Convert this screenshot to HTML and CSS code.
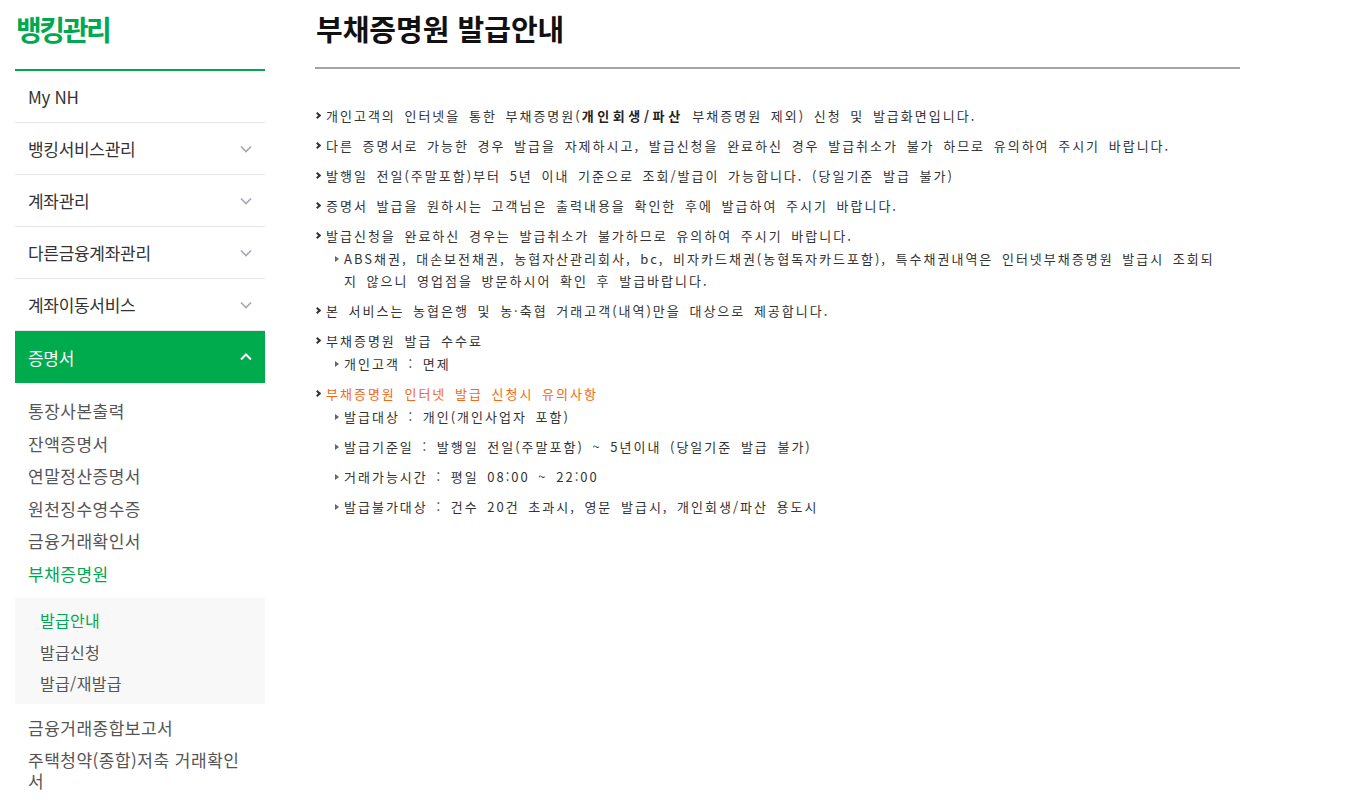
FILE: index.html
```html
<!DOCTYPE html>
<html lang="ko">
<head>
<meta charset="utf-8">
<title>부채증명원 발급안내</title>
<link rel="stylesheet" href="styles.css">
</head>
<body>
<div class="page">
  <aside class="lnb">
    <h2 class="lnb-title">뱅킹관리</h2>
    <ul class="menu">
      <li class="menu-item"><a class="menu-link" href="#">My NH</a></li>
      <li class="menu-item"><a class="menu-link" href="#">뱅킹서비스관리<svg class="arrow" width="12" height="8" viewBox="0 0 12 8"><polyline points="1,1.5 6,6.5 11,1.5"/></svg></a></li>
      <li class="menu-item"><a class="menu-link" href="#">계좌관리<svg class="arrow" width="12" height="8" viewBox="0 0 12 8"><polyline points="1,1.5 6,6.5 11,1.5"/></svg></a></li>
      <li class="menu-item"><a class="menu-link" href="#">다른금융계좌관리<svg class="arrow" width="12" height="8" viewBox="0 0 12 8"><polyline points="1,1.5 6,6.5 11,1.5"/></svg></a></li>
      <li class="menu-item"><a class="menu-link" href="#">계좌이동서비스<svg class="arrow" width="12" height="8" viewBox="0 0 12 8"><polyline points="1,1.5 6,6.5 11,1.5"/></svg></a></li>
      <li class="menu-item open"><a class="menu-link" href="#">증명서<svg class="arrow" width="12" height="8" viewBox="0 0 12 8"><polyline points="1,6.5 6,1.5 11,6.5"/></svg></a>
        <ul class="sub-menu">
          <li><a class="sub-link" href="#">통장사본출력</a></li>
          <li><a class="sub-link" href="#">잔액증명서</a></li>
          <li><a class="sub-link" href="#">연말정산증명서</a></li>
          <li><a class="sub-link" href="#">원천징수영수증</a></li>
          <li><a class="sub-link" href="#">금융거래확인서</a></li>
          <li class="on"><a class="sub-link" href="#">부채증명원</a>
            <ul class="sub-menu2">
              <li class="on"><a href="#">발급안내</a></li>
              <li><a href="#">발급신청</a></li>
              <li><a href="#">발급/재발급</a></li>
            </ul>
          </li>
          <li><a class="sub-link" href="#">금융거래종합보고서</a></li>
          <li><a class="sub-link" href="#">주택청약(종합)저축 거래확인서</a></li>
        </ul>
      </li>
    </ul>
  </aside>

  <main class="content">
    <h1 class="page-title">부채증명원 발급안내</h1>
    <ul class="info">
      <li>개인고객의 인터넷을 통한 부채증명원(<strong>개인회생/파산</strong> 부채증명원 제외) 신청 및 발급화면입니다.</li>
      <li>다른 증명서로 가능한 경우 발급을 자제하시고, 발급신청을 완료하신 경우 발급취소가 불가 하므로 유의하여 주시기 바랍니다.</li>
      <li>발행일 전일(주말포함)부터 5년 이내 기준으로 조회/발급이 가능합니다. (당일기준 발급 불가)</li>
      <li>증명서 발급을 원하시는 고객님은 출력내용을 확인한 후에 발급하여 주시기 바랍니다.</li>
      <li>발급신청을 완료하신 경우는 발급취소가 불가하므로 유의하여 주시기 바랍니다.
        <ul class="sub">
          <li>ABS채권, 대손보전채권, 농협자산관리회사, bc, 비자카드채권(농협독자카드포함), 특수채권내역은 인터넷부채증명원 발급시 조회되지 않으니 영업점을 방문하시어 확인 후 발급바랍니다.</li>
        </ul>
      </li>
      <li>본 서비스는 농협은행 및 농·축협 거래고객(내역)만을 대상으로 제공합니다.</li>
      <li>부채증명원 발급 수수료
        <ul class="sub">
          <li>개인고객 : 면제</li>
        </ul>
      </li>
      <li><span class="notice">부채증명원 인터넷 발급 신청시 유의사항</span>
        <ul class="sub">
          <li>발급대상 : 개인(개인사업자 포함)</li>
          <li>발급기준일 : 발행일 전일(주말포함) ~ 5년이내 (당일기준 발급 불가)</li>
          <li>거래가능시간 : 평일 08:00 ~ 22:00</li>
          <li>발급불가대상 : 건수 20건 초과시, 영문 발급시, 개인회생/파산 용도시</li>
        </ul>
      </li>
    </ul>
  </main>
</div>
</body>
</html>
```

FILE: styles.css
```css
body {
  margin: 0;
  background: #fff;
  color: #333;
  font-family: "Noto Sans CJK KR", "Noto Sans", sans-serif;
}

a {
  text-decoration: none;
  color: inherit;
}

.page {
  display: flex;
  align-items: flex-start;
  padding-left: 15px;
}

/* ---------- sidebar ---------- */
.lnb {
  width: 250px;
  flex: none;
}

.lnb-title {
  margin: 0;
  padding: 9px 0 20px 1px;
  font-size: 28px;
  line-height: 40px;
  font-weight: 700;
  letter-spacing: -2.4px;
  color: #00a84f;
  border-bottom: 2px solid #00a84f;
}

.menu {
  list-style: none;
  margin: 0;
  padding: 0;
}

.menu-link {
  display: flex;
  align-items: center;
  justify-content: space-between;
  height: 51px;
  padding: 0 13px;
  border-bottom: 1px solid #e6e6ec;
  font-size: 17px;
  letter-spacing: -0.3px;
  color: #333;
}

.arrow {
  flex: none;
}

.arrow polyline {
  fill: none;
  stroke: #a6a6b6;
  stroke-width: 1.6;
}

.open > .menu-link {
  height: 52px;
  border-bottom: 0;
  background: #00ab4e;
  color: #fff;
}

.open > .menu-link .arrow polyline {
  stroke: #fff;
  stroke-width: 2;
}

.sub-menu {
  list-style: none;
  margin: 0;
  padding: 12px 0 0;
}

.sub-link {
  display: block;
  padding: 6px 22px 6px 13px;
  font-size: 17px;
  line-height: 20.5px;
  letter-spacing: 0.5px;
  color: #555;
}

.sub-menu > li.on > .sub-link {
  color: #00a651;
}

.sub-menu2 {
  list-style: none;
  margin: 8px 0;
  padding: 7px 0 4px;
  background: #f8f8f8;
}

.sub-menu2 a {
  display: block;
  padding-left: 25px;
  font-size: 16px;
  line-height: 31.5px;
  letter-spacing: 0.3px;
  color: #555;
}

.sub-menu2 li.on a {
  color: #00a651;
}

/* ---------- content ---------- */
.content {
  width: 925px;
  margin-left: 50px;
  padding-top: 10px;
}

.page-title {
  margin: 0;
  padding: 0 0 20px 1px;
  font-size: 29px;
  line-height: 37px;
  font-weight: 700;
  color: #111;
  border-bottom: 2px solid #a6a6a6;
}

.info {
  list-style: none;
  margin: 36px 0 0;
  padding: 0;
  font-size: 13px;
  line-height: 22px;
  letter-spacing: 2px;
  word-spacing: 3px;
  color: #333;
  word-break: break-all;
}

.info > li {
  position: relative;
  padding-left: 11px;
  margin-bottom: 8px;
}

.info > li::before {
  content: "";
  position: absolute;
  left: 0;
  top: 8px;
  width: 3px;
  height: 3px;
  border-top: 2px solid #333;
  border-right: 2px solid #333;
  transform: rotate(45deg);
}

.info strong {
  font-weight: 700;
  letter-spacing: 3.6px;
  color: #222;
}

.notice {
  color: #f26a10;
}

.sub {
  list-style: none;
  margin: 1px 0 0;
  padding: 0 20px 0 18px;
}

.sub li {
  position: relative;
}

.sub li + li {
  margin-top: 8px;
}

.sub li::before {
  content: "";
  position: absolute;
  left: -9px;
  top: 8px;
  border-left: 4px solid #666;
  border-top: 3px solid transparent;
  border-bottom: 3px solid transparent;
}
```
